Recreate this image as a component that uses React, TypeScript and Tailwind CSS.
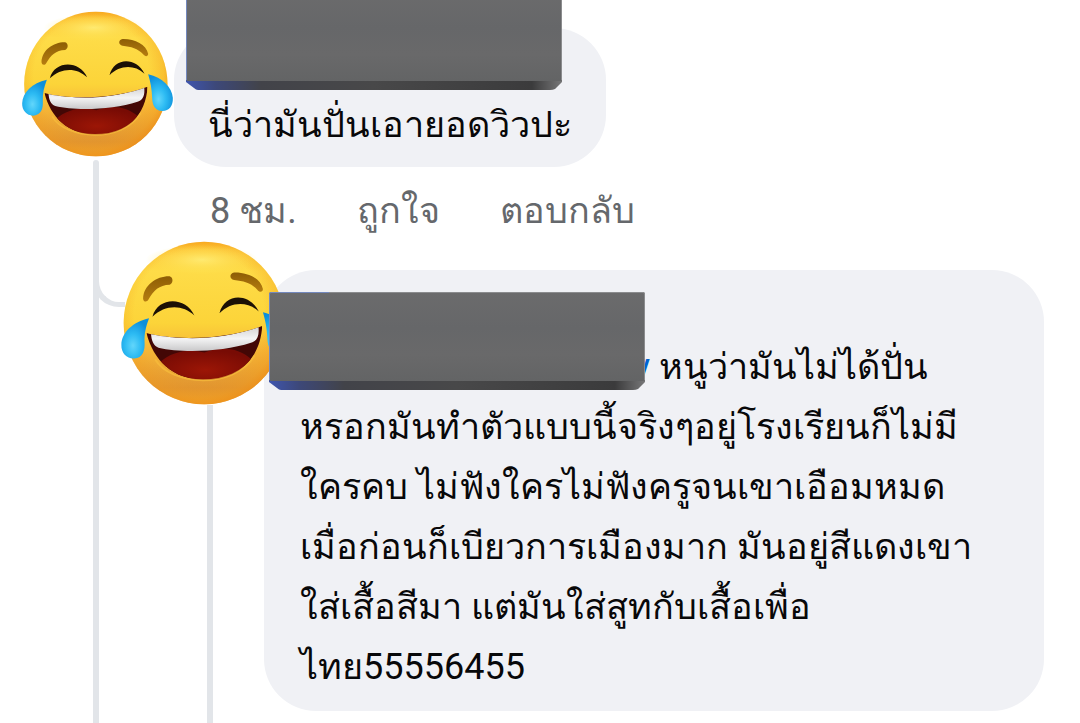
import { useId } from 'react';

const REPLY_LINES = [
  'หรอกมันทำตัวแบบนี้จริงๆอยู่โรงเรียนก็ไม่มี',
  'ใครคบ ไม่ฟังใครไม่ฟังครูจนเขาเอือมหมด',
  'เมื่อก่อนก็เบียวการเมืองมาก มันอยู่สีแดงเขา',
  'ใส่เสื้อสีมา แต่มันใส่สูทกับเสื้อเพื่อ',
  'ไทย55556455',
];

function JoyFace({ className }: { className: string }) {
  const id = useId();
  const ref = (name: string) => `url(#${id}${name})`;

  return (
    <svg viewBox="62 34 458 438" className={className} role="img" aria-label="😂">
      <defs>
        <linearGradient id={`${id}face`} x1="0" y1="0" x2="0" y2="1">
          <stop offset="0" stopColor="#f9ac20" />
          <stop offset="0.05" stopColor="#fdc73a" />
          <stop offset="0.18" stopColor="#fedc48" />
          <stop offset="0.5" stopColor="#fcd439" />
          <stop offset="0.68" stopColor="#f5b436" />
          <stop offset="0.9" stopColor="#df9432" />
          <stop offset="1" stopColor="#eda02a" />
        </linearGradient>
        <radialGradient id={`${id}rim`} cx="0.47" cy="0.45" r="0.56">
          <stop offset="0.72" stopColor="#f39b1c" stopOpacity="0" />
          <stop offset="0.9" stopColor="#f39b1c" stopOpacity="0.35" />
          <stop offset="1" stopColor="#ee8f18" stopOpacity="0.8" />
        </radialGradient>
        <radialGradient id={`${id}shine`}>
          <stop offset="0" stopColor="#fff07c" stopOpacity="0.8" />
          <stop offset="1" stopColor="#ffe550" stopOpacity="0" />
        </radialGradient>
        <linearGradient id={`${id}brow`} x1="0" y1="0" x2="0" y2="1">
          <stop offset="0" stopColor="#8d5d05" />
          <stop offset="1" stopColor="#b67d10" />
        </linearGradient>
        <radialGradient id={`${id}tongue`} cx="0.5" cy="0.65" r="0.6">
          <stop offset="0" stopColor="#9c1606" />
          <stop offset="1" stopColor="#780b04" />
        </radialGradient>
        <linearGradient id={`${id}teeth`} x1="0" y1="0" x2="0" y2="1">
          <stop offset="0" stopColor="#d3d2d3" />
          <stop offset="0.5" stopColor="#f4f4f5" />
          <stop offset="1" stopColor="#c9c8ca" />
        </linearGradient>
        <radialGradient id={`${id}tear`} cx="0.42" cy="0.68" r="0.65">
          <stop offset="0" stopColor="#62d6fb" />
          <stop offset="0.45" stopColor="#2dbbf3" />
          <stop offset="1" stopColor="#0d8fdb" />
        </radialGradient>
        <clipPath id={`${id}mouth`}>
          <path d="M132 280C210 302 350 296 441 261C437 345 380 404 288 405C202 405 150 352 132 280Z" />
        </clipPath>
      </defs>
      <ellipse cx="286" cy="253" rx="215" ry="217" fill={ref('face')} />
      <ellipse cx="286" cy="253" rx="215" ry="217" fill={ref('rim')} />
      <ellipse cx="280" cy="84" rx="150" ry="40" fill={ref('shine')} />

      {/* eyebrows */}
      <path d="M123 188C124 151 160 127 194 128C204 131 204 147 194 151C166 152 151 166 137 191C133 198 124 197 123 188Z" fill={ref('brow')} />
      <path d="M366 118C402 117 437 134 443 162C443 171 434 172 428 164C412 146 392 141 366 138C353 135 353 121 366 118Z" fill={ref('brow')} />

      {/* closed eyes */}
      <path d="M148 236C162 182 237 181 260 233C229 203 182 203 148 236Z" fill="#1b1005" />
      <path d="M327 227C340 172 407 171 432 222C400 193 356 197 327 227Z" fill="#1b1005" />

      {/* mouth */}
      <g clipPath={ref('mouth')}>
        <rect x="130" y="255" width="315" height="155" fill="#430705" />
        <path d="M165 360C205 322 258 323 287 332C323 316 377 316 412 350L370 410H200Z" fill={ref('tongue')} />
        <path d="M144 280C225 303 345 297 431 262C434 286 428 302 411 306C338 330 226 334 164 319C151 315 145 300 144 280Z" fill={ref('teeth')} />
      </g>
      <path d="M155 350C196 421 367 431 421 340" fill="none" stroke="#f8be3c" strokeWidth="5" opacity="0.7" />

      {/* tears */}
      <path d="M139 240C95 250 66 278 65 311C64 333 80 349 99 348C123 346 128 326 127 305C126 281 130 264 139 240Z" fill={ref('tear')} />
      <path d="M443 224C486 234 514 263 517 294C518 319 506 333 486 334C464 334 456 318 455 296C454 268 450 248 443 224Z" fill={ref('tear')} />
    </svg>
  );
}

function CoverBlock({ className }: { className: string }) {
  const id = useId();

  return (
    <svg viewBox="0 0 376 99" className={className} aria-hidden="true">
      <defs>
        <linearGradient id={`${id}front`} x1="0" y1="0" x2="0" y2="1">
          <stop offset="0" stopColor="#6b6b6c" />
          <stop offset="0.4" stopColor="#666769" />
          <stop offset="0.7" stopColor="#69696a" />
          <stop offset="1" stopColor="#636465" />
        </linearGradient>
        <linearGradient id={`${id}edge`}>
          <stop offset="0" stopColor="#3f55ae" />
          <stop offset="0.08" stopColor="#3d4879" />
          <stop offset="0.2" stopColor="#424349" />
          <stop offset="0.5" stopColor="#484849" />
          <stop offset="0.92" stopColor="#3b3b3c" />
          <stop offset="1" stopColor="#777778" />
        </linearGradient>
      </defs>
      <path d="M0 88H376V90L369 97Q367 98 364 98H12Q10 98 8 96L0 90Z" fill={`url(#${id}edge)`} />
      <rect width="376" height="89" rx="2" fill={`url(#${id}front)`} />
      <path d="M0.500 88V2Q0.500 0.500 2 0.500H60" fill="none" stroke="#7388bd" />
      <path d="M60 0.500H374Q375.500 0.500 375.500 2V88" fill="none" stroke="#8b8c8e" />
    </svg>
  );
}

export default function App() {
  return (
    <main
      lang="th"
      className="flex min-h-screen flex-col overflow-hidden bg-white text-4xl leading-[60px] text-[#080809] font-[Roboto,sans-serif]"
    >
      <article className="flex">
        <div className="flex w-[174px] shrink-0 flex-col pt-[11px]">
          <JoyFace className="ml-[21px] h-[146px] w-[153px]" />
          <div className="mt-[3px] ml-[93px] w-1.5 flex-1 rounded-t-sm bg-[#e2e5e9]" />
        </div>
        <div className="pt-7">
          <div className="relative w-fit rounded-[52px] bg-[#f0f1f5] px-[34px] pt-[67px] pb-3 leading-[60px]">
            <p>นี่ว่ามันปั่นเอายอดวิวปะ</p>
            <CoverBlock className="absolute -top-9 left-3 h-[99px] w-[376px]" />
          </div>
          <div className="flex h-[74px] items-center gap-15 pt-[14px] pl-9 text-[#65686c]">
            <span>8 ชม.</span>
            <button type="button">ถูกใจ</button>
            <button type="button">ตอบกลับ</button>
          </div>
        </div>
      </article>

      <article className="flex flex-1">
        <div className="flex w-[120px] shrink-0 pl-[93px]">
          <div className="w-1.5 shrink-0 bg-[#e2e5e9]" />
          <div className="-ml-1.5 h-[66px] w-8 shrink-0 rounded-bl-[26px] border-b-[5px] border-l-[6px] border-[#e2e5e9]" />
        </div>
        <div className="z-10 flex w-36 shrink-0 flex-col">
          <JoyFace className="h-[164px] w-[172px] max-w-none shrink-0" />
          <div className="ml-[87px] w-1.5 flex-1 bg-[#e2e5e9]" />
        </div>
        <div className="flex-1 pt-[29px] pr-9 pb-3">
          <div className="relative z-20">
            <CoverBlock className="absolute top-[22px] left-[5px] h-[99px] w-[376px]" />
          </div>
          <div className="rounded-[52px] bg-[#f0f1f5] px-9 pt-[67px] pb-[14px]">
            <p className="whitespace-nowrap">
              <a href="#mention" className="inline-block w-[350px] text-right text-[#0064d1]">y</a>
              {' หนูว่ามันไม่ได้ปั่น'}
              {REPLY_LINES.map((line) => (
                <span key={line} className="block">{line}</span>
              ))}
            </p>
          </div>
        </div>
      </article>
    </main>
  );
}
